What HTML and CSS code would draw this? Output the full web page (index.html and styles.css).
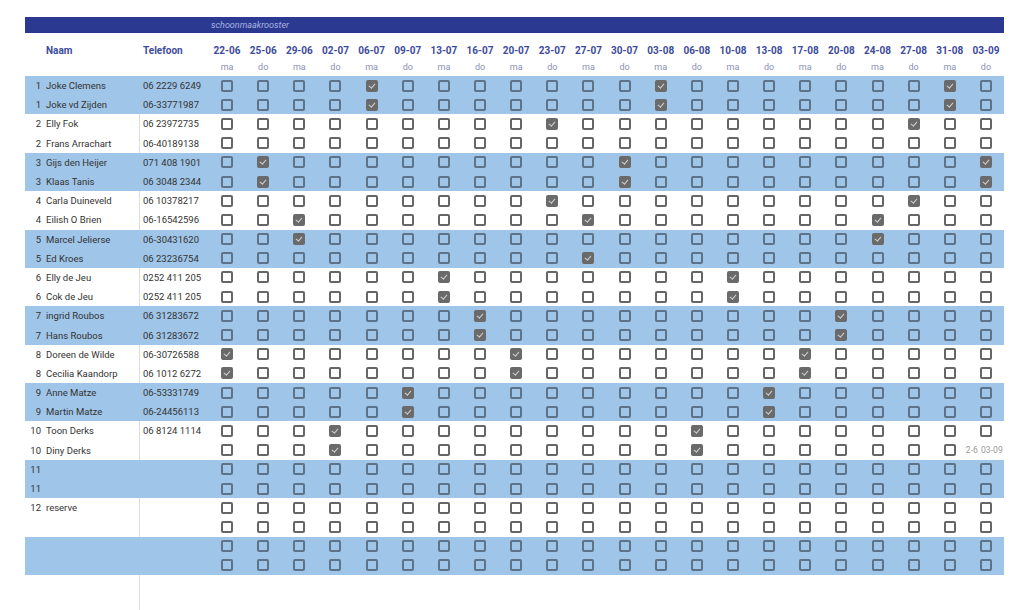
FILE: index.html
```html
<!DOCTYPE html>
<html lang="nl">
<head>
<meta charset="utf-8">
<title>schoonmaakrooster</title>
<link rel="stylesheet" href="styles.css">
</head>
<body>
<div class="sheet">
  <div class="title"><span>schoonmaakrooster</span></div>

  <div class="row head1">
    <div class="hname">Naam</div><div class="htel">Telefoon</div>
    <b>22-06</b><b>25-06</b><b>29-06</b><b>02-07</b><b>06-07</b><b>09-07</b><b>13-07</b><b>16-07</b><b>20-07</b><b>23-07</b><b>27-07</b><b>30-07</b><b>03-08</b><b>06-08</b><b>10-08</b><b>13-08</b><b>17-08</b><b>20-08</b><b>24-08</b><b>27-08</b><b>31-08</b><b>03-09</b>
  </div>
  <div class="row head2">
    <div></div><div></div>
    <s>ma</s><s>do</s><s>ma</s><s>do</s><s>ma</s><s>do</s><s>ma</s><s>do</s><s>ma</s><s>do</s><s>ma</s><s>do</s><s>ma</s><s>do</s><s>ma</s><s>do</s><s>ma</s><s>do</s><s>ma</s><s>do</s><s>ma</s><s>do</s>
  </div>

  <div class="row band">
    <div class="nm"><span class="no">1</span><span>Joke Clemens</span></div><div class="tel">06 2229 6249</div>
    <i class="c"></i><i class="c"></i><i class="c"></i><i class="c"></i><i class="c k"></i><i class="c"></i><i class="c"></i><i class="c"></i><i class="c"></i><i class="c"></i><i class="c"></i><i class="c"></i><i class="c k"></i><i class="c"></i><i class="c"></i><i class="c"></i><i class="c"></i><i class="c"></i><i class="c"></i><i class="c"></i><i class="c k"></i><i class="c"></i>
  </div>
  <div class="row band">
    <div class="nm"><span class="no">1</span><span>Joke vd Zijden</span></div><div class="tel">06-33771987</div>
    <i class="c"></i><i class="c"></i><i class="c"></i><i class="c"></i><i class="c k"></i><i class="c"></i><i class="c"></i><i class="c"></i><i class="c"></i><i class="c"></i><i class="c"></i><i class="c"></i><i class="c k"></i><i class="c"></i><i class="c"></i><i class="c"></i><i class="c"></i><i class="c"></i><i class="c"></i><i class="c"></i><i class="c k"></i><i class="c"></i>
  </div>
  <div class="row">
    <div class="nm"><span class="no">2</span><span>Elly Fok</span></div><div class="tel">06 23972735</div>
    <i class="c"></i><i class="c"></i><i class="c"></i><i class="c"></i><i class="c"></i><i class="c"></i><i class="c"></i><i class="c"></i><i class="c"></i><i class="c k"></i><i class="c"></i><i class="c"></i><i class="c"></i><i class="c"></i><i class="c"></i><i class="c"></i><i class="c"></i><i class="c"></i><i class="c"></i><i class="c k"></i><i class="c"></i><i class="c"></i>
  </div>
  <div class="row">
    <div class="nm"><span class="no">2</span><span>Frans Arrachart</span></div><div class="tel">06-40189138</div>
    <i class="c"></i><i class="c"></i><i class="c"></i><i class="c"></i><i class="c"></i><i class="c"></i><i class="c"></i><i class="c"></i><i class="c"></i><i class="c"></i><i class="c"></i><i class="c"></i><i class="c"></i><i class="c"></i><i class="c"></i><i class="c"></i><i class="c"></i><i class="c"></i><i class="c"></i><i class="c"></i><i class="c"></i><i class="c"></i>
  </div>
  <div class="row band">
    <div class="nm"><span class="no">3</span><span>Gijs den Heijer</span></div><div class="tel">071 408 1901</div>
    <i class="c"></i><i class="c k"></i><i class="c"></i><i class="c"></i><i class="c"></i><i class="c"></i><i class="c"></i><i class="c"></i><i class="c"></i><i class="c"></i><i class="c"></i><i class="c k"></i><i class="c"></i><i class="c"></i><i class="c"></i><i class="c"></i><i class="c"></i><i class="c"></i><i class="c"></i><i class="c"></i><i class="c"></i><i class="c k"></i>
  </div>
  <div class="row band">
    <div class="nm"><span class="no">3</span><span>Klaas Tanis</span></div><div class="tel">06 3048 2344</div>
    <i class="c"></i><i class="c k"></i><i class="c"></i><i class="c"></i><i class="c"></i><i class="c"></i><i class="c"></i><i class="c"></i><i class="c"></i><i class="c"></i><i class="c"></i><i class="c k"></i><i class="c"></i><i class="c"></i><i class="c"></i><i class="c"></i><i class="c"></i><i class="c"></i><i class="c"></i><i class="c"></i><i class="c"></i><i class="c k"></i>
  </div>
  <div class="row">
    <div class="nm"><span class="no">4</span><span>Carla Duineveld</span></div><div class="tel">06 10378217</div>
    <i class="c"></i><i class="c"></i><i class="c"></i><i class="c"></i><i class="c"></i><i class="c"></i><i class="c"></i><i class="c"></i><i class="c"></i><i class="c k"></i><i class="c"></i><i class="c"></i><i class="c"></i><i class="c"></i><i class="c"></i><i class="c"></i><i class="c"></i><i class="c"></i><i class="c"></i><i class="c k"></i><i class="c"></i><i class="c"></i>
  </div>
  <div class="row">
    <div class="nm"><span class="no">4</span><span>Eilish O Brien</span></div><div class="tel">06-16542596</div>
    <i class="c"></i><i class="c"></i><i class="c k"></i><i class="c"></i><i class="c"></i><i class="c"></i><i class="c"></i><i class="c"></i><i class="c"></i><i class="c"></i><i class="c k"></i><i class="c"></i><i class="c"></i><i class="c"></i><i class="c"></i><i class="c"></i><i class="c"></i><i class="c"></i><i class="c k"></i><i class="c"></i><i class="c"></i><i class="c"></i>
  </div>
  <div class="row band">
    <div class="nm"><span class="no">5</span><span>Marcel Jelierse</span></div><div class="tel">06-30431620</div>
    <i class="c"></i><i class="c"></i><i class="c k"></i><i class="c"></i><i class="c"></i><i class="c"></i><i class="c"></i><i class="c"></i><i class="c"></i><i class="c"></i><i class="c"></i><i class="c"></i><i class="c"></i><i class="c"></i><i class="c"></i><i class="c"></i><i class="c"></i><i class="c"></i><i class="c k"></i><i class="c"></i><i class="c"></i><i class="c"></i>
  </div>
  <div class="row band">
    <div class="nm"><span class="no">5</span><span>Ed Kroes</span></div><div class="tel">06 23236754</div>
    <i class="c"></i><i class="c"></i><i class="c"></i><i class="c"></i><i class="c"></i><i class="c"></i><i class="c"></i><i class="c"></i><i class="c"></i><i class="c"></i><i class="c k"></i><i class="c"></i><i class="c"></i><i class="c"></i><i class="c"></i><i class="c"></i><i class="c"></i><i class="c"></i><i class="c"></i><i class="c"></i><i class="c"></i><i class="c"></i>
  </div>
  <div class="row">
    <div class="nm"><span class="no">6</span><span>Elly de Jeu</span></div><div class="tel">0252 411 205</div>
    <i class="c"></i><i class="c"></i><i class="c"></i><i class="c"></i><i class="c"></i><i class="c"></i><i class="c k"></i><i class="c"></i><i class="c"></i><i class="c"></i><i class="c"></i><i class="c"></i><i class="c"></i><i class="c"></i><i class="c k"></i><i class="c"></i><i class="c"></i><i class="c"></i><i class="c"></i><i class="c"></i><i class="c"></i><i class="c"></i>
  </div>
  <div class="row">
    <div class="nm"><span class="no">6</span><span>Cok de Jeu</span></div><div class="tel">0252 411 205</div>
    <i class="c"></i><i class="c"></i><i class="c"></i><i class="c"></i><i class="c"></i><i class="c"></i><i class="c k"></i><i class="c"></i><i class="c"></i><i class="c"></i><i class="c"></i><i class="c"></i><i class="c"></i><i class="c"></i><i class="c k"></i><i class="c"></i><i class="c"></i><i class="c"></i><i class="c"></i><i class="c"></i><i class="c"></i><i class="c"></i>
  </div>
  <div class="row band">
    <div class="nm"><span class="no">7</span><span>ingrid Roubos</span></div><div class="tel">06 31283672</div>
    <i class="c"></i><i class="c"></i><i class="c"></i><i class="c"></i><i class="c"></i><i class="c"></i><i class="c"></i><i class="c k"></i><i class="c"></i><i class="c"></i><i class="c"></i><i class="c"></i><i class="c"></i><i class="c"></i><i class="c"></i><i class="c"></i><i class="c"></i><i class="c k"></i><i class="c"></i><i class="c"></i><i class="c"></i><i class="c"></i>
  </div>
  <div class="row band">
    <div class="nm"><span class="no">7</span><span>Hans Roubos</span></div><div class="tel">06 31283672</div>
    <i class="c"></i><i class="c"></i><i class="c"></i><i class="c"></i><i class="c"></i><i class="c"></i><i class="c"></i><i class="c k"></i><i class="c"></i><i class="c"></i><i class="c"></i><i class="c"></i><i class="c"></i><i class="c"></i><i class="c"></i><i class="c"></i><i class="c"></i><i class="c k"></i><i class="c"></i><i class="c"></i><i class="c"></i><i class="c"></i>
  </div>
  <div class="row">
    <div class="nm"><span class="no">8</span><span>Doreen de Wilde</span></div><div class="tel">06-30726588</div>
    <i class="c k"></i><i class="c"></i><i class="c"></i><i class="c"></i><i class="c"></i><i class="c"></i><i class="c"></i><i class="c"></i><i class="c k"></i><i class="c"></i><i class="c"></i><i class="c"></i><i class="c"></i><i class="c"></i><i class="c"></i><i class="c"></i><i class="c k"></i><i class="c"></i><i class="c"></i><i class="c"></i><i class="c"></i><i class="c"></i>
  </div>
  <div class="row">
    <div class="nm"><span class="no">8</span><span>Cecilia Kaandorp</span></div><div class="tel">06 1012 6272</div>
    <i class="c k"></i><i class="c"></i><i class="c"></i><i class="c"></i><i class="c"></i><i class="c"></i><i class="c"></i><i class="c"></i><i class="c k"></i><i class="c"></i><i class="c"></i><i class="c"></i><i class="c"></i><i class="c"></i><i class="c"></i><i class="c"></i><i class="c k"></i><i class="c"></i><i class="c"></i><i class="c"></i><i class="c"></i><i class="c"></i>
  </div>
  <div class="row band">
    <div class="nm"><span class="no">9</span><span>Anne Matze</span></div><div class="tel">06-53331749</div>
    <i class="c"></i><i class="c"></i><i class="c"></i><i class="c"></i><i class="c"></i><i class="c k"></i><i class="c"></i><i class="c"></i><i class="c"></i><i class="c"></i><i class="c"></i><i class="c"></i><i class="c"></i><i class="c"></i><i class="c"></i><i class="c k"></i><i class="c"></i><i class="c"></i><i class="c"></i><i class="c"></i><i class="c"></i><i class="c"></i>
  </div>
  <div class="row band">
    <div class="nm"><span class="no">9</span><span>Martin Matze</span></div><div class="tel">06-24456113</div>
    <i class="c"></i><i class="c"></i><i class="c"></i><i class="c"></i><i class="c"></i><i class="c k"></i><i class="c"></i><i class="c"></i><i class="c"></i><i class="c"></i><i class="c"></i><i class="c"></i><i class="c"></i><i class="c"></i><i class="c"></i><i class="c k"></i><i class="c"></i><i class="c"></i><i class="c"></i><i class="c"></i><i class="c"></i><i class="c"></i>
  </div>
  <div class="row">
    <div class="nm"><span class="no">10</span><span>Toon Derks</span></div><div class="tel">06 8124 1114</div>
    <i class="c"></i><i class="c"></i><i class="c"></i><i class="c k"></i><i class="c"></i><i class="c"></i><i class="c"></i><i class="c"></i><i class="c"></i><i class="c"></i><i class="c"></i><i class="c"></i><i class="c"></i><i class="c k"></i><i class="c"></i><i class="c"></i><i class="c"></i><i class="c"></i><i class="c"></i><i class="c"></i><i class="c"></i><i class="c"></i>
  </div>
  <div class="row">
    <div class="nm"><span class="no">10</span><span>Diny Derks</span></div><div class="tel"></div>
    <i class="c"></i><i class="c"></i><i class="c"></i><i class="c k"></i><i class="c"></i><i class="c"></i><i class="c"></i><i class="c"></i><i class="c"></i><i class="c"></i><i class="c"></i><i class="c"></i><i class="c"></i><i class="c k"></i><i class="c"></i><i class="c"></i><i class="c"></i><i class="c"></i><i class="c"></i><i class="c"></i><i class="c"></i><span class="note">2-6 03-09</span>
  </div>
  <div class="row band">
    <div class="nm"><span class="no">11</span><span></span></div><div class="tel"></div>
    <i class="c"></i><i class="c"></i><i class="c"></i><i class="c"></i><i class="c"></i><i class="c"></i><i class="c"></i><i class="c"></i><i class="c"></i><i class="c"></i><i class="c"></i><i class="c"></i><i class="c"></i><i class="c"></i><i class="c"></i><i class="c"></i><i class="c"></i><i class="c"></i><i class="c"></i><i class="c"></i><i class="c"></i><i class="c"></i>
  </div>
  <div class="row band">
    <div class="nm"><span class="no">11</span><span></span></div><div class="tel"></div>
    <i class="c"></i><i class="c"></i><i class="c"></i><i class="c"></i><i class="c"></i><i class="c"></i><i class="c"></i><i class="c"></i><i class="c"></i><i class="c"></i><i class="c"></i><i class="c"></i><i class="c"></i><i class="c"></i><i class="c"></i><i class="c"></i><i class="c"></i><i class="c"></i><i class="c"></i><i class="c"></i><i class="c"></i><i class="c"></i>
  </div>
  <div class="row">
    <div class="nm"><span class="no">12</span><span>reserve</span></div><div class="tel"></div>
    <i class="c"></i><i class="c"></i><i class="c"></i><i class="c"></i><i class="c"></i><i class="c"></i><i class="c"></i><i class="c"></i><i class="c"></i><i class="c"></i><i class="c"></i><i class="c"></i><i class="c"></i><i class="c"></i><i class="c"></i><i class="c"></i><i class="c"></i><i class="c"></i><i class="c"></i><i class="c"></i><i class="c"></i><i class="c"></i>
  </div>
  <div class="row">
    <div class="nm"></div><div class="tel"></div>
    <i class="c"></i><i class="c"></i><i class="c"></i><i class="c"></i><i class="c"></i><i class="c"></i><i class="c"></i><i class="c"></i><i class="c"></i><i class="c"></i><i class="c"></i><i class="c"></i><i class="c"></i><i class="c"></i><i class="c"></i><i class="c"></i><i class="c"></i><i class="c"></i><i class="c"></i><i class="c"></i><i class="c"></i><i class="c"></i>
  </div>
  <div class="row band">
    <div class="nm"></div><div class="tel"></div>
    <i class="c"></i><i class="c"></i><i class="c"></i><i class="c"></i><i class="c"></i><i class="c"></i><i class="c"></i><i class="c"></i><i class="c"></i><i class="c"></i><i class="c"></i><i class="c"></i><i class="c"></i><i class="c"></i><i class="c"></i><i class="c"></i><i class="c"></i><i class="c"></i><i class="c"></i><i class="c"></i><i class="c"></i><i class="c"></i>
  </div>
  <div class="row band">
    <div class="nm"></div><div class="tel"></div>
    <i class="c"></i><i class="c"></i><i class="c"></i><i class="c"></i><i class="c"></i><i class="c"></i><i class="c"></i><i class="c"></i><i class="c"></i><i class="c"></i><i class="c"></i><i class="c"></i><i class="c"></i><i class="c"></i><i class="c"></i><i class="c"></i><i class="c"></i><i class="c"></i><i class="c"></i><i class="c"></i><i class="c"></i><i class="c"></i>
  </div>

  <div class="rest"></div>
</div>
</body>
</html>
```

FILE: styles.css
```css
html, body {
  margin: 0;
  padding: 0;
  background: #ffffff;
}

body {
  font-family: Roboto, "Liberation Sans", sans-serif;
  color: #333333;
}

.sheet {
  margin: 17px 0 0 25px;
  width: 979px;
  overflow: hidden;
}

.title {
  height: 16px;
  background: #2b3990;
  display: grid;
  grid-template-columns: 184px 1fr;
  align-items: center;
}

.title span {
  grid-column: 2;
  padding-left: 2px;
  font-size: 9px;
  font-style: italic;
  color: #aab3e0;
  line-height: 16px;
}

.row {
  display: grid;
  grid-template-columns: 114px 70px repeat(22, minmax(0, 1fr));
  align-items: center;
  height: 19.2px;
}

.band {
  background: #9fc5e8;
}

/* header */
.head1 {
  height: 25px;
  align-items: end;
}

.head1 > * {
  font-size: 10px;
  font-weight: 700;
  color: #3d4b9c;
  line-height: 14px;
  text-align: center;
}

.head1 .hname {
  text-align: left;
  padding-left: 21px;
}

.head1 .htel {
  text-align: left;
  padding-left: 4px;
}

.head2 {
  height: 18px;
}

.head2 s {
  text-decoration: none;
  font-size: 9px;
  color: #8a90b2;
  text-align: center;
  line-height: 12px;
}

/* data rows */
.nm {
  display: flex;
  gap: 5px;
  font-size: 9.5px;
  white-space: nowrap;
}

.nm .no {
  width: 16px;
  text-align: right;
}

.tel {
  align-self: stretch;
  display: flex;
  align-items: center;
  padding-left: 3px;
  font-size: 9.5px;
  border-left: 1px solid #dddddd;
  white-space: nowrap;
}

.band .tel {
  border-left-color: transparent;
}

/* checkboxes */
.c {
  justify-self: center;
  position: relative;
  width: 12px;
  height: 12px;
  box-sizing: border-box;
  border: 2px solid #666666;
  border-radius: 2px;
  background: #ffffff;
}

.band .c {
  border-color: #5d7389;
  background: transparent;
}

.c.k,
.band .c.k {
  background: #6a6a6a;
  border-color: #6a6a6a;
}

.c.k::after {
  content: "";
  position: absolute;
  left: 2px;
  top: 0px;
  width: 2.5px;
  height: 5px;
  border: solid #d0d0d0;
  border-width: 0 1.3px 1.3px 0;
  transform: rotate(40deg);
}

.note {
  justify-self: start;
  margin-left: -2px;
  font-size: 8.6px;
  word-spacing: 1px;
  color: #9a9a9a;
  white-space: nowrap;
}

.rest {
  height: 40px;
  margin-left: 114px;
  border-left: 1px solid #dddddd;
}
```
